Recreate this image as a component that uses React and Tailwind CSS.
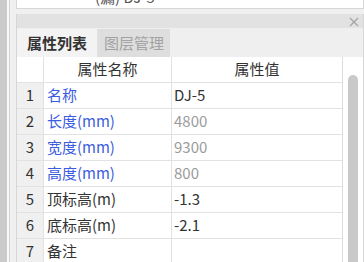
const rows = [
  { n: 1, name: "名称", value: "DJ-5", blue: true, muted: false },
  { n: 2, name: "长度(mm)", value: "4800", blue: true, muted: true },
  { n: 3, name: "宽度(mm)", value: "9300", blue: true, muted: true },
  { n: 4, name: "高度(mm)", value: "800", blue: true, muted: true },
  { n: 5, name: "顶标高(m)", value: "-1.3", blue: false, muted: false },
  { n: 6, name: "底标高(m)", value: "-2.1", blue: false, muted: false },
  { n: 7, name: "备注", value: "", blue: false, muted: false },
];

export default function App() {
  return (
    <div
      className="flex h-[262px] w-[364px] overflow-hidden bg-[#f0f0f0] text-[15px] text-[#333]"
      style={{ fontFamily: '"Noto Sans CJK SC", "Noto Sans", sans-serif' }}
    >
      {/* left edge */}
      <div className="w-[7px] shrink-0 bg-[#cbcbcb]" />
      <div className="w-[2px] shrink-0 bg-[#f8f8f8]" />
      <div className="w-[1px] shrink-0 bg-[#d4d4d4]" />
      <div className="w-[6px] shrink-0 bg-[#f0f0f0]" />

      <div className="flex min-w-0 flex-1 flex-col">
        {/* clipped box above */}
        <div className="h-[9px] shrink-0 overflow-hidden border-x border-b border-[#d6d6d6] bg-white pr-[1px]">
          <div className="-mt-[13px] pl-[78px] leading-[20px] text-[#555]">(漏) DJ-5</div>
        </div>
        <div className="h-[5px] shrink-0" />

        <div className="flex min-h-0 flex-1 flex-col border-x border-[#d6d6d6]">
          {/* title bar */}
          <div className="flex h-[14px] shrink-0 items-center justify-end bg-[#e2e2e2] pr-[4px]">
            <svg width="10" height="10" viewBox="0 0 10 10" className="mt-[1px]">
              <path d="M1 1 L9 9 M9 1 L1 9" stroke="#a6a6a6" strokeWidth="1.4" />
            </svg>
          </div>

          {/* tabs */}
          <div className="flex h-[29px] shrink-0 items-end bg-[#efefef]">
            <div className="flex h-[28px] w-[81px] items-center justify-center border-r border-[#e2e2e2] bg-[#f3f3f3] font-bold text-[#333]">
              属性列表
            </div>
            <div className="flex h-[28px] w-[72px] items-center justify-center bg-[#dedede] text-[#a2a2a2]">
              图层管理
            </div>
          </div>

          {/* table + scrollbar */}
          <div className="flex min-h-0 flex-1 bg-white">
            <div className="w-[326px] shrink-0 border-r border-[#dcdcdc]">
              <div className="grid h-[26px] grid-cols-[27px_128px_1fr] border-b border-[#e2e2e2]">
                <div className="border-r border-[#e2e2e2]" />
                <div className="flex items-center justify-center border-r border-[#e2e2e2]">属性名称</div>
                <div className="flex items-center justify-center">属性值</div>
              </div>
              {rows.map((r) => (
                <div key={r.n} className="grid h-[26px] grid-cols-[27px_128px_1fr] border-b border-[#e2e2e2]">
                  <div className="flex items-center justify-center border-r border-[#e2e2e2] bg-[#f0f0f0]">{r.n}</div>
                  <div
                    className={`flex items-center border-r border-[#e2e2e2] pl-[3px] ${
                      r.blue ? "text-[#3b5ce0]" : "text-[#333]"
                    }`}
                  >
                    {r.name}
                  </div>
                  <div className={`flex items-center pl-[2px] ${r.muted ? "text-[#9b9b9b]" : "text-[#333]"}`}>
                    {r.value}
                  </div>
                </div>
              ))}
            </div>
            <div className="flex flex-1 justify-center pt-[18px]">
              <div className="w-[10px] rounded-t-full bg-[#c9c9c9]" />
            </div>
          </div>
        </div>
      </div>
    </div>
  );
}
